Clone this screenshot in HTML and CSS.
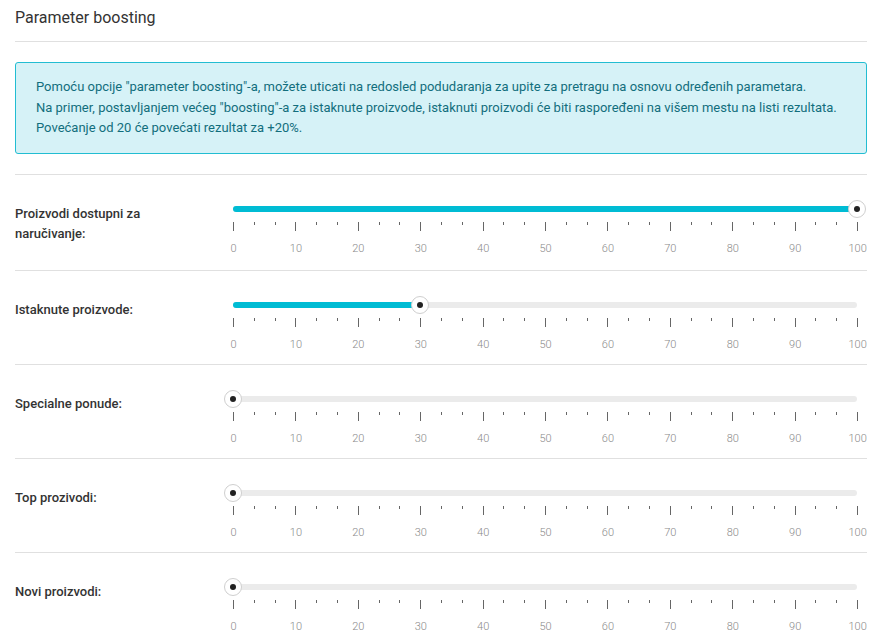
FILE: index.html
```html
<!DOCTYPE html>
<html lang="sr">

<head>
    <meta charset="UTF-8">
    <meta name="viewport" content="width=device-width, initial-scale=1.0">
    <title>Parameter boosting</title>
    <link rel="stylesheet" href="styles.css">
</head>

<body>
    <div class="page">
        <h2 class="page-title">Parameter boosting</h2>

        <div class="alert">
            Pomoću opcije "parameter boosting"-a, možete uticati na redosled podudaranja za upite za pretragu na osnovu određenih parametara.<br>
            Na primer, postavljanjem većeg "boosting"-a za istaknute proizvode, istaknuti proizvodi će biti raspoređeni na višem mestu na listi rezultata.<br>
            Povećanje od 20 će povećati rezultat za +20%.
        </div>

        <div class="boost-list">
            <div class="boost-row">
                <div class="boost-label">Proizvodi dostupni za naručivanje:</div>
                <div class="slider">
                    <div class="slider-track">
                        <div class="slider-fill" style="width: 100%"></div>
                        <span class="slider-thumb" style="left: 100%"></span>
                    </div>
                    <div class="slider-ticks"></div>
                    <div class="slider-scale">
                        <span>0</span><span>10</span><span>20</span><span>30</span><span>40</span><span>50</span>
                        <span>60</span><span>70</span><span>80</span><span>90</span><span>100</span>
                    </div>
                </div>
            </div>

            <div class="boost-row">
                <div class="boost-label">Istaknute proizvode:</div>
                <div class="slider">
                    <div class="slider-track">
                        <div class="slider-fill" style="width: 30%"></div>
                        <span class="slider-thumb" style="left: 30%"></span>
                    </div>
                    <div class="slider-ticks"></div>
                    <div class="slider-scale">
                        <span>0</span><span>10</span><span>20</span><span>30</span><span>40</span><span>50</span>
                        <span>60</span><span>70</span><span>80</span><span>90</span><span>100</span>
                    </div>
                </div>
            </div>

            <div class="boost-row">
                <div class="boost-label">Specialne ponude:</div>
                <div class="slider">
                    <div class="slider-track">
                        <div class="slider-fill" style="width: 0%"></div>
                        <span class="slider-thumb" style="left: 0%"></span>
                    </div>
                    <div class="slider-ticks"></div>
                    <div class="slider-scale">
                        <span>0</span><span>10</span><span>20</span><span>30</span><span>40</span><span>50</span>
                        <span>60</span><span>70</span><span>80</span><span>90</span><span>100</span>
                    </div>
                </div>
            </div>

            <div class="boost-row">
                <div class="boost-label">Top prozivodi:</div>
                <div class="slider">
                    <div class="slider-track">
                        <div class="slider-fill" style="width: 0%"></div>
                        <span class="slider-thumb" style="left: 0%"></span>
                    </div>
                    <div class="slider-ticks"></div>
                    <div class="slider-scale">
                        <span>0</span><span>10</span><span>20</span><span>30</span><span>40</span><span>50</span>
                        <span>60</span><span>70</span><span>80</span><span>90</span><span>100</span>
                    </div>
                </div>
            </div>

            <div class="boost-row">
                <div class="boost-label">Novi proizvodi:</div>
                <div class="slider">
                    <div class="slider-track">
                        <div class="slider-fill" style="width: 0%"></div>
                        <span class="slider-thumb" style="left: 0%"></span>
                    </div>
                    <div class="slider-ticks"></div>
                    <div class="slider-scale">
                        <span>0</span><span>10</span><span>20</span><span>30</span><span>40</span><span>50</span>
                        <span>60</span><span>70</span><span>80</span><span>90</span><span>100</span>
                    </div>
                </div>
            </div>
        </div>
    </div>
</body>

</html>
```

FILE: styles.css
```css
body {
    margin: 0;
    font-family: Roboto, "Liberation Sans", sans-serif;
    color: #333;
    background: #fff;
}

.page {
    padding: 0 15px;
}

.page-title {
    margin: 0;
    padding: 7px 0 12px;
    font-size: 16px;
    line-height: 22px;
    font-weight: 400;
    color: #333;
    border-bottom: 1px solid #e0e0e0;
}

.alert {
    margin: 20px 0;
    padding: 14px 20px;
    font-size: 13px;
    line-height: 20.5px;
    color: #126e7d;
    background-color: #d6f2f7;
    border: 1px solid #22bdd2;
    border-radius: 3px;
}

.boost-row {
    display: flex;
    padding: 25px 0 12px;
    border-top: 1px solid #e0e0e0;
}

.boost-row:first-child {
    padding-bottom: 14px;
}

.boost-label {
    flex: none;
    width: 185px;
    margin-top: 4px;
    padding-right: 33px;
    font-size: 13px;
    line-height: 20px;
    font-weight: 500;
    color: #333;
}

.slider {
    flex: none;
    width: 624px;
}

.slider-track {
    position: relative;
    height: 6px;
    margin: 6px 0 10px;
    background-color: #ebebeb;
    border-radius: 3px;
}

.slider-fill {
    height: 100%;
    background-color: #00bcd4;
    border-radius: 3px;
}

.slider-thumb {
    position: absolute;
    top: 50%;
    width: 16px;
    height: 16px;
    background: #fff;
    border: 1px solid #cfcfcf;
    border-radius: 50%;
    transform: translate(-50%, -50%);
}

.slider-thumb::after {
    content: "";
    position: absolute;
    top: 5px;
    left: 5px;
    width: 6px;
    height: 6px;
    border-radius: 50%;
    background: #222;
}

.slider-ticks {
    width: 625px;
    height: 9px;
    background-image:
        repeating-linear-gradient(to right, #666 0, #666 1px, transparent 1px, transparent 62.4px),
        repeating-linear-gradient(to right, #666 0, #666 1px, transparent 1px, transparent 20.8px);
    background-size: 100% 9px, 100% 3px;
    background-repeat: no-repeat;
}

.slider-scale {
    display: flex;
    width: 686.4px;
    margin: 11px 0 0 -30.7px;
    font-size: 11px;
    font-weight: 300;
    line-height: 14px;
    color: #8a8a8a;
}

.slider-scale span {
    flex: 1;
    text-align: center;
}
```
